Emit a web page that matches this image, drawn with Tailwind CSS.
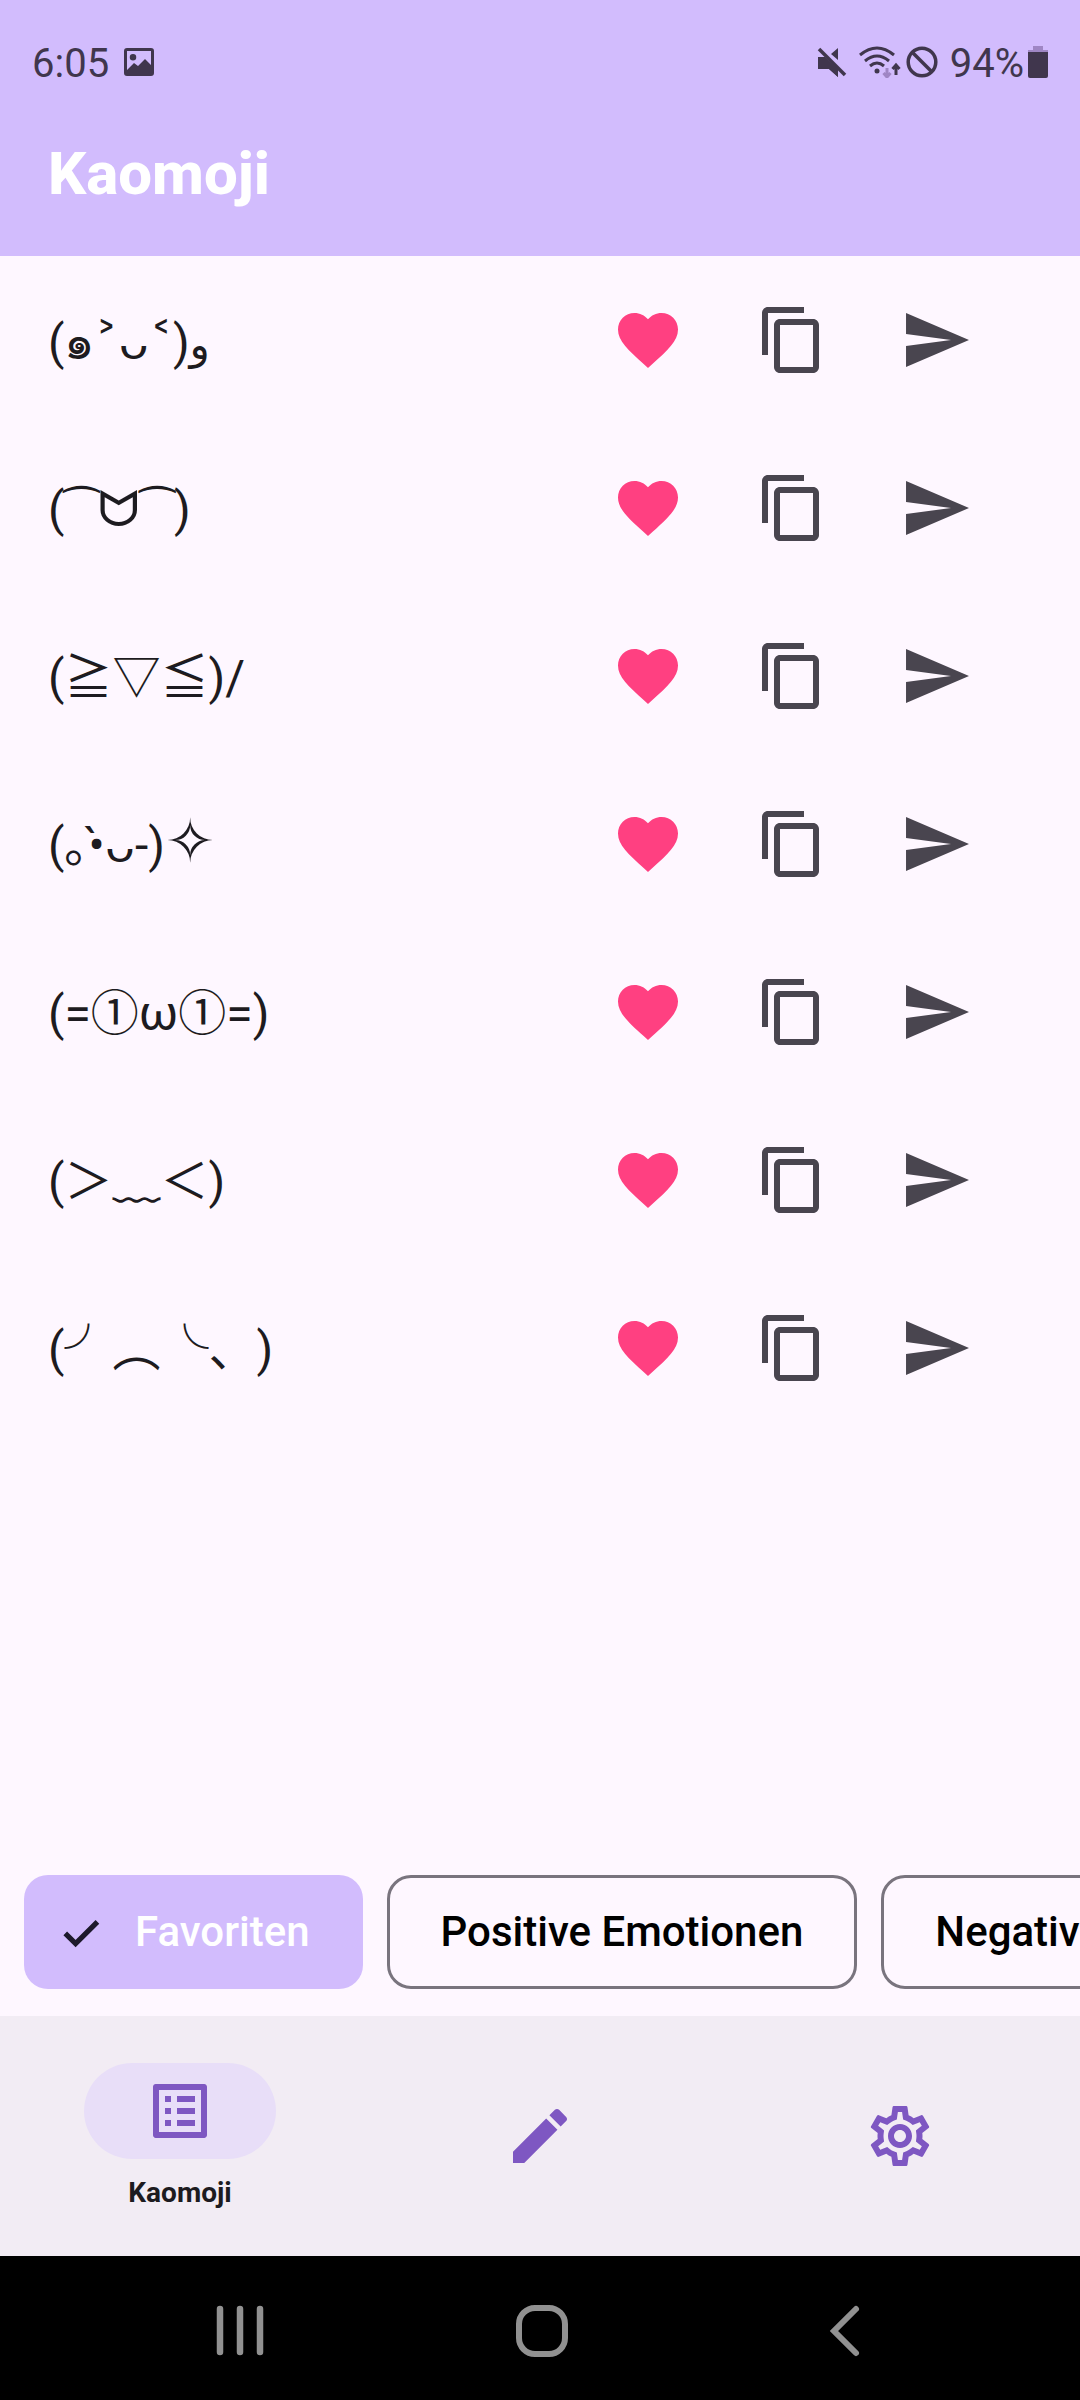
<!DOCTYPE html>
<html lang="de">
<head>
<meta charset="utf-8">
<meta name="viewport" content="width=device-width, initial-scale=1">
<title>Kaomoji</title>
<script src="https://cdn.jsdelivr.net/npm/@tailwindcss/browser@4"></script>
</head>
<body class="bg-[#fef7ff]">
<svg class="hidden">
  <symbol id="heart" viewBox="0 0 24 24"><path d="M12 21.35l-1.45-1.32C5.4 15.36 2 12.28 2 8.5 2 5.42 4.42 3 7.5 3c1.74 0 3.41.81 4.5 2.09C13.09 3.81 14.76 3 16.5 3 19.58 3 22 5.42 22 8.5c0 3.78-3.4 6.86-8.55 11.54L12 21.35z"/></symbol>
  <symbol id="copy" viewBox="0 0 24 24"><path d="M16 1H4c-1.100 0-2 .9-2 2v14h2V3h12V1zm3 4H8c-1.100 0-2 .9-2 2v14c0 1.100.9 2 2 2h11c1.100 0 2-.9 2-2V7c0-1.100-.9-2-2-2zm0 16H8V7h11v14z"/></symbol>
  <symbol id="send" viewBox="0 0 24 24"><path d="M2.010 21L23 12 2.010 3v7L17 12 2.010 14z"/></symbol>
</svg>
<div class="flex min-h-screen flex-col font-['Roboto','Noto_Sans','Noto_Sans_CJK_JP','DejaVu_Sans',sans-serif] text-[#1d1b20]">
  <header class="bg-[#d2bcfd]">
    <div class="flex h-22 items-center pt-9 pr-8 pl-8 text-[40px] leading-none text-[#40364d]">
      <span class="pt-1">6:05</span>
      <svg class="ml-3.5 h-[30px] w-[32px]" viewBox="0 0 32 30" fill="currentColor"><path fill-rule="evenodd" d="M4 1h24a3 3 0 0 1 3 3v22a3 3 0 0 1-3 3H4a3 3 0 0 1-3-3V4a3 3 0 0 1 3-3zM4 4v19l7-7 4 3 7-7 6 6V4zM10 7a3 3 0 1 1 0 6.500 3 3 0 0 1 0-6.500z"/></svg>
      <div class="ml-auto flex items-center">
        <svg class="h-8 w-8" viewBox="0 0 32 32" fill="currentColor"><path d="M2 11h7l13 12v8l-9-8H2zM22 2v12l-7-6z"/><path d="M4 3l25 25" stroke="#d2bcfd" stroke-width="6"/><path d="M3 3l26 26" stroke="currentColor" stroke-width="3.500"/><path d="M2 11h7l13 12v8l-9-8H2z"/></svg>
        <svg class="ml-[10px] h-8 w-11" viewBox="0 0 44 32" fill="none" stroke="currentColor" stroke-width="3"><path d="M2 9Q19-5 36 9M7 15Q19 5 31 15M12 20Q19 14 26 20"/><circle cx="19" cy="25" r="2.500" fill="currentColor" stroke="none"/><path d="M38 29V20M34.500 23l3.500-4 3.500 4"/><path d="M29 22v9M25.500 27l3.500 4 3.500-4" stroke="#9f86c4"/></svg>
        <svg class="ml-1 h-8 w-8" viewBox="0 0 32 32" fill="none" stroke="currentColor" stroke-width="3.500"><circle cx="16" cy="16" r="13.800"/><path d="M6 6l20 20"/></svg>
        <span class="ml-3 pt-1">94%</span>
        <svg class="ml-1 h-8 w-5" viewBox="0 0 20 32"><path d="M5 0h10v4h5v5H0V4h5z" fill="#9f86c4"/><path d="M0 6h20v24a2 2 0 0 1-2 2H2a2 2 0 0 1-2-2z" fill="currentColor"/></svg>
      </div>
    </div>
    <h1 class="flex h-42 items-center px-12 pt-1 text-[60px] font-extrabold leading-none text-white">Kaomoji</h1>
  </header>

  <main class="flex flex-1 flex-col">
    <ul id="list" class="flex-1 text-[48px] leading-[72px] [text-spacing-trim:space-all]"></ul>
    <div class="flex gap-6 overflow-hidden px-6 pb-[27px] text-[42px] font-medium leading-[48px] whitespace-nowrap text-black">
      <button class="flex h-[114px] shrink-0 items-center rounded-3xl bg-[#d2bcfd] pr-[53px] pl-[30px] text-white"><svg class="mr-[27px] size-[54px]" viewBox="0 0 24 24" fill="none" stroke="#1d192b" stroke-width="2.300"><path d="M5 12.600L9.600 17.200 19.300 7.500"/></svg>Favoriten</button>
      <button class="h-[114px] shrink-0 rounded-3xl border-3 border-[#79747e] px-[51px]">Positive Emotionen</button>
      <button class="h-[114px] shrink-0 rounded-3xl border-3 border-[#79747e] px-[51px]">Negative Emotionen</button>
    </div>
  </main>

  <nav class="grid h-60 grid-cols-3 bg-[#f2ecf4] text-[#7e57c2]">
    <a href="#kaomoji" class="flex flex-col items-center pt-[47px]">
      <span class="flex h-24 w-48 items-center justify-center rounded-full bg-[#e8def8]"><svg class="size-18" viewBox="0 0 24 24" fill="currentColor"><path d="M19 5v14H5V5h14m1.100-2H3.900c-.5 0-.9.4-.9.900v16.200c0 .4.4.9.900.9h16.200c.4 0 .9-.5.900-.9V3.900c0-.5-.5-.9-.9-.9zM11 7h6v2h-6V7zm0 4h6v2h-6v-2zm0 4h6v2h-6zM7 7h2v2H7zm0 4h2v2H7zm0 4h2v2H7z"/></svg></span>
      <span class="pt-3.5 text-[28px] font-bold leading-[40px] text-[#1d1b20]">Kaomoji</span>
    </a>
    <a href="#edit" aria-label="Bearbeiten" class="flex items-center justify-center"><svg class="size-18" viewBox="0 0 24 24" fill="currentColor"><path d="M3 17.250V21h3.750L17.810 9.940l-3.750-3.750L3 17.250zM20.710 7.040c.39-.39.39-1.020 0-1.410l-2.340-2.340c-.39-.39-1.020-.39-1.410 0l-1.830 1.830 3.750 3.750 1.830-1.830z"/></svg></a>
    <a href="#settings" aria-label="Einstellungen" class="flex items-center justify-center"><svg class="size-18" viewBox="0 0 24 24" fill="currentColor"><path d="M19.430 12.980c.04-.32.07-.64.07-.98s-.03-.66-.07-.98l2.110-1.650c.19-.15.24-.42.12-.64l-2-3.460c-.09-.16-.26-.25-.44-.25-.06 0-.12.010-.17.030l-2.490 1c-.52-.4-1.080-.73-1.690-.98l-.38-2.650C14.460 2.180 14.250 2 14 2h-4c-.25 0-.46.18-.49.42l-.38 2.650c-.61.25-1.170.59-1.690.98l-2.490-1c-.06-.02-.12-.03-.18-.03-.17 0-.34.09-.43.25l-2 3.460c-.13.22-.07.49.12.64l2.110 1.650c-.04.32-.07.65-.07.98s.03.66.07.98l-2.110 1.650c-.19.15-.24.42-.12.64l2 3.460c.09.16.26.25.44.25.06 0 .12-.01.17-.03l2.490-1c.52.4 1.080.73 1.690.98l.38 2.650c.03.24.24.42.49.42h4c.25 0 .46-.18.49-.42l.38-2.650c.61-.25 1.170-.59 1.690-.98l2.490 1c.06.02.12.03.18.03.17 0 .34-.09.43-.25l2-3.460c.12-.22.07-.49-.12-.64l-2.110-1.650zm-1.980-1.710c.04.31.05.52.05.73s-.02.43-.05.73l-.14 1.130.89.700 1.080.84-.7 1.210-1.270-.51-1.040-.42-.9.680c-.43.32-.84.56-1.250.73l-1.060.43-.16 1.130-.2 1.350h-1.400l-.19-1.350-.16-1.130-1.060-.43c-.43-.18-.83-.41-1.230-.71l-.91-.7-1.060.43-1.270.51-.7-1.210 1.080-.84.890-.7-.14-1.130c-.03-.31-.05-.54-.05-.74s.02-.43.050-.73l.14-1.130-.89-.7-1.080-.84.700-1.210 1.270.51 1.040.42.900-.68c.43-.32.84-.56 1.250-.73l1.060-.43.160-1.130.2-1.350h1.390l.19 1.350.16 1.130 1.060.43c.43.18.83.41 1.230.71l.91.700 1.060-.43 1.270-.51.700 1.210-1.070.85-.89.700.14 1.130zM12 8c-2.210 0-4 1.790-4 4s1.790 4 4 4 4-1.790 4-4-1.790-4-4-4zm0 6c-1.100 0-2-.9-2-2s.9-2 2-2 2 .9 2 2-.9 2-2 2z"/></svg></a>
  </nav>

  <div class="flex h-36 items-center justify-between bg-black pt-[6px] pr-[210px] pl-[210px] text-[#919191]">
    <button aria-label="Letzte Apps"><svg class="h-15 w-15" viewBox="0 0 60 60" fill="none" stroke="currentColor" stroke-width="6.500" stroke-linecap="round"><path d="M10 8v43M30 8v43M50 8v43"/></svg></button>
    <button aria-label="Startseite"><svg class="h-15 w-15" viewBox="0 0 60 60" fill="none" stroke="currentColor" stroke-width="6"><rect x="9" y="7" width="46" height="46" rx="16"/></svg></button>
    <button aria-label="Zurück"><svg class="h-15 w-15" viewBox="0 0 60 60" fill="none" stroke="currentColor" stroke-width="6" stroke-linecap="round"><path d="M46 8L24 30 46 52"/></svg></button>
  </div>
</div>
<script>
  // Marks that the base font draws too small take a fuller face.
  const mark = t => `<span class="font-['DejaVu_Sans',sans-serif]">${t}</span>`;
  const arc = `<span class="font-['DejaVu_Sans',sans-serif] text-[42px] leading-none">⁀</span>`;
  const kaomoji = [
    `(๑${mark("˃")}ᴗ${mark("˂")})&lrm;<span class="font-['DejaVu_Sans',sans-serif] text-[42px] leading-none">و</span>`,
    `(${arc}<span class="text-[50px] leading-none">ᗢ</span>${arc})`,
    "(≧▽≦)/",
    `(｡•̀ᴗ-)<span class="text-[60px] leading-none">✧</span>`,
    "(=①ω①=)",
    "(＞﹏＜)",
    "(╯︵╰、)"
  ];
  const button = (icon, label, color) => `<button aria-label="${label}" class="flex w-36 items-center justify-center ${color}"><svg class="size-18" fill="currentColor"><use href="#${icon}"/></svg></button>`;
  document.getElementById("list").innerHTML = kaomoji.map(k => `
    <li class="flex h-42 items-stretch pr-18 pl-12">
      <div class="flex flex-1 items-center pt-1"><span>${k}</span></div>
      ${button("heart", "Favorit", "text-[#ff4081]")}${button("copy", "Kopieren", "text-[#49454f]")}${button("send", "Senden", "text-[#49454f]")}
    </li>`).join("");
</script>
</body>
</html>
